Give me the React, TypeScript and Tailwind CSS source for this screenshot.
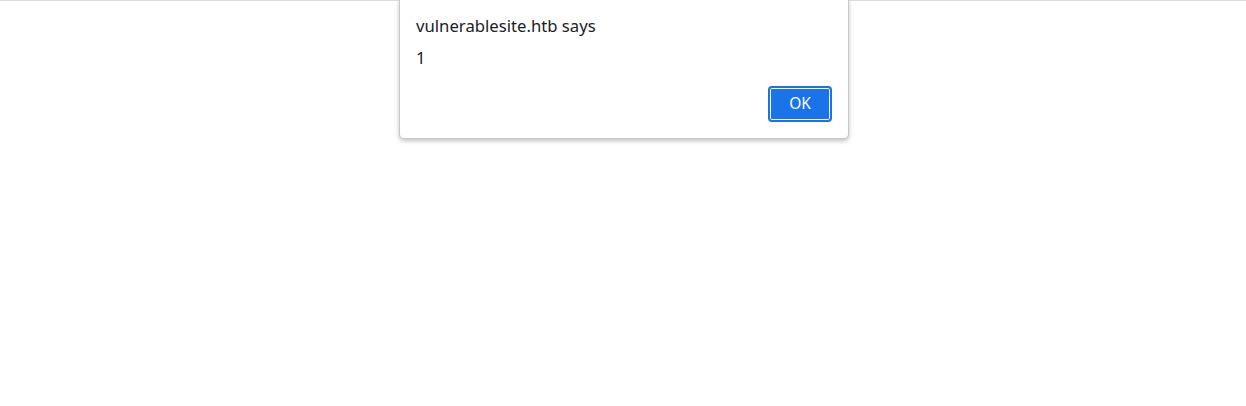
import React from "react";

const AlertDialog: React.FC<{ origin: string; message: string }> = ({ origin, message }) => {
  return (
    <div className="w-[450px] -mt-px rounded-b-[5px] border border-t-0 border-[#c8c8c8] bg-white px-4 pt-[14px] pb-4 shadow-[0_2px_4px_rgba(0,0,0,0.25)]">
      <div className="text-[16.7px] leading-6 text-[#202124]">{origin} says</div>
      <div className="mt-2 text-[16.7px] leading-6 text-[#202124]">{message}</div>
      <div className="mt-[16px] flex justify-end">
        {/* focused OK button */}
        <button
          type="button"
          className="h-[36px] w-[64px] rounded-[4px] border-2 border-[#1a73e8] bg-[#1a73e8] text-[15.5px] text-white outline-none shadow-[inset_0_0_0_1px_#ffffff]"
        >
          OK
        </button>
      </div>
    </div>
  );
};

export default function App() {
  return (
    <div
      className="relative h-[406px] w-full border-t border-[#dcdcdc] bg-white"
      style={{ fontFamily: '"Noto Sans", "Open Sans", sans-serif' }}
    >
      <div className="absolute left-[399px] top-0">
        <AlertDialog origin="vulnerablesite.htb" message="1" />
      </div>
    </div>
  );
}
